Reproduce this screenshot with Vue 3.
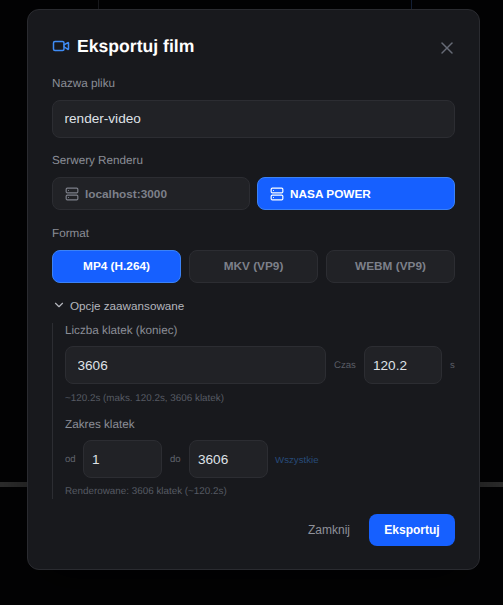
<script setup>
import { ref } from 'vue';

const fileName = ref('render-video');
const servers = [
  { name: 'localhost:3000', active: false },
  { name: 'NASA POWER', active: true },
];
const formats = [
  { name: 'MP4 (H.264)', active: true },
  { name: 'MKV (VP9)', active: false },
  { name: 'WEBM (VP9)', active: false },
];
</script>

<template>
  <div class="backdrop">
    <div class="bg-line bg-line--v1"></div>
    <div class="bg-line bg-line--v2"></div>
    <div class="bg-line bg-line--h"></div>

    <div class="modal">
      <header class="modal-header">
        <h2 class="modal-title">
          <svg class="title-icon" viewBox="0 0 24 24" fill="none" stroke="currentColor" stroke-width="2" stroke-linecap="round" stroke-linejoin="round">
            <path d="m16 13 5.223 3.482a.5.5 0 0 0 .777-.416V7.87a.5.5 0 0 0-.752-.432L16 10.5" />
            <rect x="2" y="6" width="14" height="12" rx="2" />
          </svg>
          Eksportuj film
        </h2>
        <button class="close-btn" type="button" aria-label="Zamknij">
          <svg viewBox="0 0 24 24" fill="none" stroke="currentColor" stroke-width="1.8" stroke-linecap="round">
            <path d="M18 6 6 18" />
            <path d="m6 6 12 12" />
          </svg>
        </button>
      </header>

      <div class="field">
        <label class="label">Nazwa pliku</label>
        <input v-model="fileName" class="input" type="text" />
      </div>

      <div class="field">
        <label class="label">Serwery Renderu</label>
        <div class="server-grid">
          <button
            v-for="s in servers"
            :key="s.name"
            type="button"
            class="choice choice--server"
            :class="{ 'choice--active': s.active }"
          >
            <svg class="server-icon" viewBox="0 0 24 24" fill="none" stroke="currentColor" stroke-width="2" stroke-linecap="round" stroke-linejoin="round">
              <rect x="2" y="2" width="20" height="8" rx="2" />
              <rect x="2" y="14" width="20" height="8" rx="2" />
              <path d="M6 6h.01" />
              <path d="M6 18h.01" />
            </svg>
            {{ s.name }}
          </button>
        </div>
      </div>

      <div class="field">
        <label class="label">Format</label>
        <div class="format-grid">
          <button
            v-for="f in formats"
            :key="f.name"
            type="button"
            class="choice"
            :class="{ 'choice--active': f.active }"
          >
            {{ f.name }}
          </button>
        </div>
      </div>

      <button class="advanced-toggle" type="button">
        <svg viewBox="0 0 24 24" fill="none" stroke="currentColor" stroke-width="2" stroke-linecap="round" stroke-linejoin="round">
          <path d="m6 9 6 6 6-6" />
        </svg>
        Opcje zaawansowane
      </button>

      <div class="advanced">
        <label class="label label--small">Liczba klatek (koniec)</label>
        <div class="row">
          <input class="input input--grow" type="text" value="3606" />
          <span class="unit unit--czas">Czas</span>
          <input class="input input--time" type="text" value="120.2" />
          <span class="unit unit--s">s</span>
        </div>
        <p class="hint">~120.2s (maks. 120.2s, 3606 klatek)</p>

        <label class="label label--range">Zakres klatek</label>
        <div class="row">
          <span class="unit unit--od">od</span>
          <input class="input input--range" type="text" value="1" />
          <span class="unit unit--do">do</span>
          <input class="input input--range" type="text" value="3606" />
          <button class="link-btn" type="button">Wszystkie</button>
        </div>
        <p class="hint hint--last">Renderowane: 3606 klatek (~120.2s)</p>
      </div>

      <footer class="modal-footer">
        <button class="btn-ghost" type="button">Zamknij</button>
        <button class="btn-primary" type="button">Eksportuj</button>
      </footer>
    </div>
  </div>
</template>

<style>
html,
body {
  margin: 0;
  background: #000;
}
</style>

<style scoped>
.backdrop {
  position: relative;
  width: 503px;
  height: 605px;
  overflow: hidden;
  box-sizing: border-box;
  padding: 9px 0 0 27px;
  background: #030304;
  font-family: "Liberation Sans", Arial, sans-serif;
  text-rendering: geometricPrecision;
}

.bg-line {
  position: absolute;
  background: #1a1b1f;
}

.bg-line--v1 {
  left: 98px;
  top: 0;
  width: 1px;
  height: 9px;
}

.bg-line--v2 {
  left: 411px;
  top: 0;
  width: 1px;
  height: 9px;
  background: #15223a;
}

.bg-line--h {
  left: 0;
  right: 0;
  top: 482px;
  height: 5px;
  background: #2e2e2e;
}

.modal {
  position: relative;
  box-sizing: border-box;
  width: 453px;
  height: 561px;
  padding: 24px;
  background: #18191d;
  border: 1px solid #2a2b30;
  border-radius: 12px;
  box-shadow: 0 20px 50px rgba(0, 0, 0, 0.5);
}

.modal-header {
  display: flex;
  align-items: center;
  justify-content: space-between;
  height: 24px;
  margin-bottom: 18px;
}

.modal-title {
  display: flex;
  align-items: center;
  gap: 7px;
  margin: 0;
  color: #fff;
  font-size: 17.6px;
  font-weight: 700;
  line-height: 24px;
}

.title-icon {
  width: 18px;
  height: 18px;
  color: #3f8cf5;
}

.close-btn {
  display: flex;
  width: 20px;
  height: 20px;
  padding: 0;
  margin: 3px -2px 0 0;
  background: none;
  border: 0;
  color: #666b76;
}

.field {
  margin-bottom: 15.5px;
}

.label {
  display: block;
  margin-bottom: 8px;
  color: #8a8d96;
  font-size: 11.7px;
  line-height: 16px;
}

.label--small {
  margin-bottom: 7px;
}

.label--range {
  position: relative;
  top: 1px;
  margin-top: 10px;
}

.input {
  display: block;
  box-sizing: border-box;
  width: 100%;
  height: 37.5px;
  padding: 0 11.5px;
  background: #212226;
  border: 1px solid #2c2d32;
  border-radius: 8px;
  outline: none;
  color: #dfe1e6;
  font-family: inherit;
  font-size: 13.6px;
}

.input--grow {
  flex: 1;
  width: auto;
  min-width: 0;
}

.input--time {
  flex: none;
  width: 78px;
  padding: 0 8px;
}

.input--range {
  flex: none;
  width: 79px;
  padding: 0 8px;
}

.advanced .input {
  height: 38px;
}

.server-grid {
  display: grid;
  grid-template-columns: 1fr 1fr;
  gap: 7px;
}

.format-grid {
  display: grid;
  grid-template-columns: repeat(3, 1fr);
  gap: 8px;
}

.choice {
  display: flex;
  align-items: center;
  justify-content: center;
  box-sizing: border-box;
  height: 33px;
  padding: 0 12px;
  background: #212226;
  border: 1px solid #2c2d32;
  border-radius: 8px;
  color: #7d808a;
  font-family: inherit;
  font-size: 11.8px;
  font-weight: 700;
}

.choice--server {
  justify-content: flex-start;
  gap: 6px;
}

.choice--active {
  background: #1660ff;
  border-color: #3b82f6;
  color: #fff;
}

.server-icon {
  width: 14px;
  height: 14px;
}

.advanced-toggle {
  display: flex;
  align-items: center;
  gap: 4px;
  height: 16px;
  padding: 0;
  margin: -1px 0 10px;
  background: none;
  border: 0;
  color: #b4b6bd;
  font-family: inherit;
  font-size: 11.7px;
}

.advanced-toggle svg {
  width: 14px;
  height: 14px;
}

.advanced {
  box-sizing: border-box;
  height: 176px;
  padding-left: 12px;
  border-left: 1px solid #2c2d32;
}

.row {
  display: flex;
  align-items: center;
  gap: 8px;
}

.unit {
  flex: none;
  color: #5a5d66;
  font-size: 9.6px;
}

.unit--czas {
  width: 22px;
}

.unit--s {
  width: 5px;
}

.unit--od {
  width: 10px;
  color: #5f626b;
}

.unit--do {
  width: 11px;
  color: #5f626b;
}

.hint {
  margin: 8px 0 0;
  color: #565963;
  font-size: 9.85px;
  line-height: 14px;
}

.hint--last {
  margin-top: 7px;
}

.link-btn {
  padding: 0;
  margin-left: -1px;
  background: none;
  border: 0;
  color: #274a78;
  font-family: inherit;
  font-size: 9.7px;
}

.modal-footer {
  display: flex;
  justify-content: flex-end;
  align-items: center;
  gap: 19px;
  margin-top: 15px;
}

.btn-ghost {
  padding: 0;
  background: none;
  border: 0;
  color: #8f919a;
  font-family: inherit;
  font-size: 12px;
}

.btn-primary {
  box-sizing: border-box;
  width: 86px;
  height: 32px;
  background: #1660ff;
  border: 0;
  border-radius: 8px;
  color: #fff;
  font-family: inherit;
  font-size: 12px;
  font-weight: 700;
}
</style>
